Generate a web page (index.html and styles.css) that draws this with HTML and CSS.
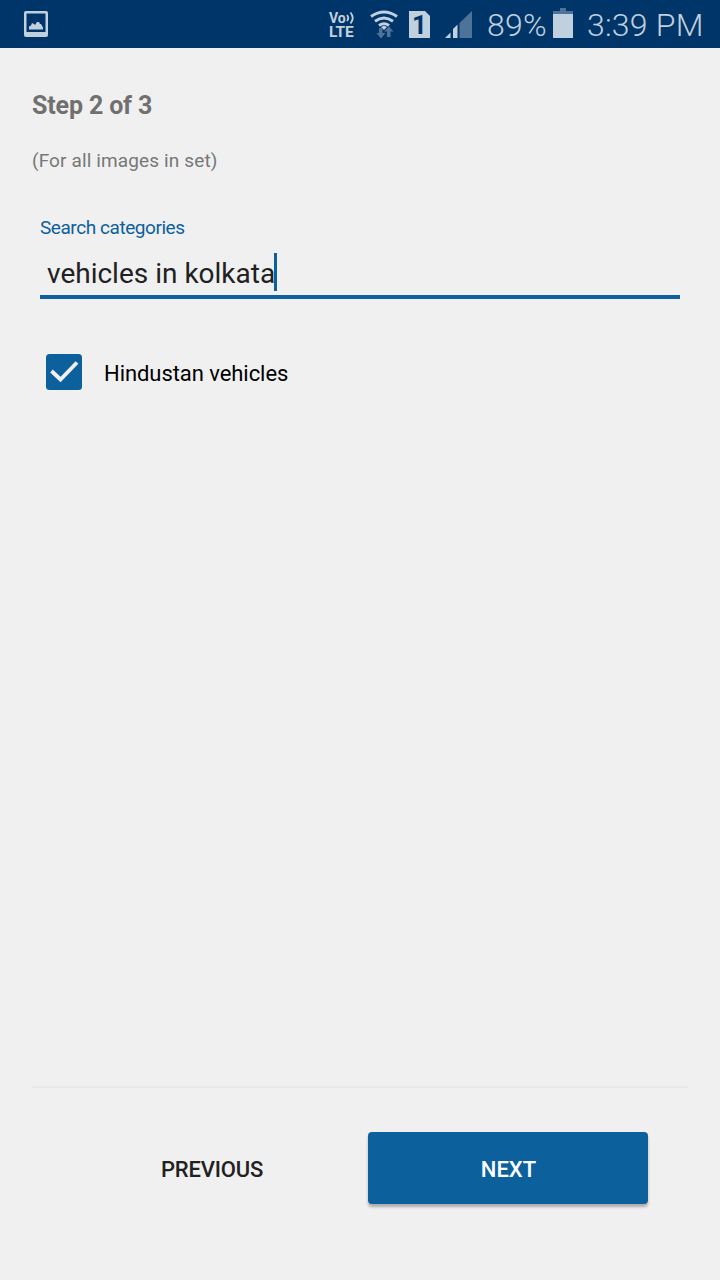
FILE: index.html
```html
<!DOCTYPE html>
<html lang="en">
<head>
<meta charset="utf-8">
<title>Upload categories</title>
<link rel="stylesheet" href="styles.css">
</head>
<body>
<div class="screen">
  <header class="status-bar">
    <svg class="image-icon" width="24" height="26" viewBox="0 0 24 26"><path fill-rule="evenodd" d="M2 0h20q2 0 2 2v22q0 2-2 2H2q-2 0-2-2V2q0-2 2-2zM2.500 2.500v18.500h19V2.500z"/><path d="M5 18.500v-3l2-1 1-2.500 2 1 1 1 2-3h2l1 2h1l2 3.500v2z"/></svg>
    <div class="volte"><span class="vo">Vo<svg width="9" height="14" viewBox="0 0 9 14"><path d="M1 4q2.500 3 0 6M4.500 1.500q4.500 5.500 0 11"/></svg></span><span class="lte">LTE</span></div>
    <svg class="wifi" width="28" height="29" viewBox="0 0 28 29"><g fill="none" stroke="#c1d0df" stroke-width="2.900"><path d="M1 6.500Q14-2.500 27 6.500M5 11.300q9-6.500 18 0M9 15.500q5-3.500 10 0"/></g><path d="M11 17q3-2 6 0l-3 3z"/><path class="dim" d="M9 18h3.500v5h3L11 28.500l-4.500-5.500H9zM17 27v-5.500h-3l5-5 4.500 5h-3V27z"/></svg>
    <div class="sim">1</div>
    <svg class="signal" width="27" height="27" viewBox="0 0 27 27"><path d="M0 27l5.500-5.500V27zM8 27v-9l4.500-4.500V27z"/><path class="dim" d="M14.500 27V12L27 0v27z"/></svg>
    <span class="percent">89%</span>
    <svg class="battery" width="20" height="30" viewBox="0 0 20 30"><path class="dim" d="M0 3h7V0h6v3h7v4H0z"/><path d="M0 6h20v24H0z"/></svg>
    <time class="clock">3:39 PM</time>
  </header>
  <main class="content">
    <h1 class="step">Step 2 of 3</h1>
    <p class="note">(For all images in set)</p>
    <section class="search">
      <div class="search-label">Search categories</div>
      <div class="search-field"><span>vehicles in kolkata</span><i class="caret"></i></div>
    </section>
    <div class="option">
      <svg class="checkbox" width="36" height="36" viewBox="0 0 36 36"><rect width="36" height="36" rx="3.500" fill="#0c609c"/><path d="M5.500 17l9 8.500L31 8.500" fill="none" stroke="#f0f0f0" stroke-width="3.800"/></svg>
      <span class="option-name">Hindustan vehicles</span>
    </div>
  </main>
  <footer class="actions">
    <button class="button previous"><span>PREVIOUS</span></button>
    <button class="button next"><span>NEXT</span></button>
  </footer>
</div>
</body>
</html>
```
FILE: styles.css
```css
* { box-sizing: border-box; }
body { margin: 0; background: #f0f0f0; font-family: Roboto, sans-serif; }
.screen { width: 720px; height: 1280px; display: flex; flex-direction: column; background: #f0f0f0; }
.status-bar { height: 48px; flex: none; display: flex; align-items: flex-start; background: #003569; color: #c1d0df; white-space: nowrap; }
.status-bar svg { flex: none; fill: #c1d0df; }
.status-bar .dim { fill: #4d7399; }
.image-icon { margin: 11px 0 0 24px; }
.volte { width: 27px; height: 30px; margin: 11px 0 0 281px; font-weight: 700; }
.volte span { display: flex; }
.volte .vo { height: 14px; font-size: 14px; line-height: 14px; }
.volte svg { fill: none; stroke: #c1d0df; stroke-width: 1.8; }
.volte .lte { height: 15px; font-size: 15.500px; line-height: 15px; letter-spacing: -0.100px; }
.wifi { margin: 10px 0 0 14px; }
.sim { width: 21px; height: 27px; margin: 11px 0 0 11px; background: #c1d0df; clip-path: polygon(0 0, 16px 0, 100% 5px, 100% 100%, 0 100%); color: #003569; font-size: 26px; font-weight: 700; line-height: 28px; text-align: center; }
.signal { margin: 11px 0 0 15px; }
.percent, .clock { font-size: 32px; font-weight: 300; line-height: 48px; margin-top: 1px; letter-spacing: 0.200px; }
.percent { width: 66px; margin-left: 15px; }
.battery { margin: 8px 0 0; }
.clock { margin-left: 14px; }
.content { flex: 1; padding: 40px 32px 0; }
.step { margin: 0; height: 36px; font-size: 25px; line-height: 36px; font-weight: 700; letter-spacing: -0.150px; color: #707070; }
.note { margin: 23px 0 0; height: 28px; font-size: 19px; line-height: 28px; letter-spacing: 0.130px; color: #777; }
.search { margin: 39px 8px 0; }
.search-label { height: 28px; font-size: 19px; line-height: 28px; letter-spacing: -0.440px; color: #0c609c; }
.search-field { height: 57px; padding: 11px 0 0 7px; display: flex; border-bottom: 4px solid #0c609c; font-size: 28px; line-height: 42px; color: #212121; }
.caret { width: 3px; height: 38px; margin-left: -1px; background: #0c609c; }
.option { display: flex; align-items: center; height: 36px; margin: 55px 0 0 14px; gap: 22px; font-size: 22px; letter-spacing: -0.060px; color: #000; }
.option-name { padding-top: 2px; }
.actions { height: 194px; flex: none; margin: 0 32px; padding: 44px 40px 0 16px; display: flex; justify-content: space-between; border-top: 2px solid #e8e8e8; }
.button { width: 280px; height: 72px; border: 0; padding: 2px 0 0; border-radius: 4px; font: 500 22px Roboto, sans-serif; letter-spacing: -0.200px; }
.previous { background: transparent; color: #212121; margin-left: 24px; }
.next { padding-left: 1px; background: #0c609c; color: #fff; box-shadow: 0 3px 3px rgba(0, 0, 0, .28); letter-spacing: 0; }
```
